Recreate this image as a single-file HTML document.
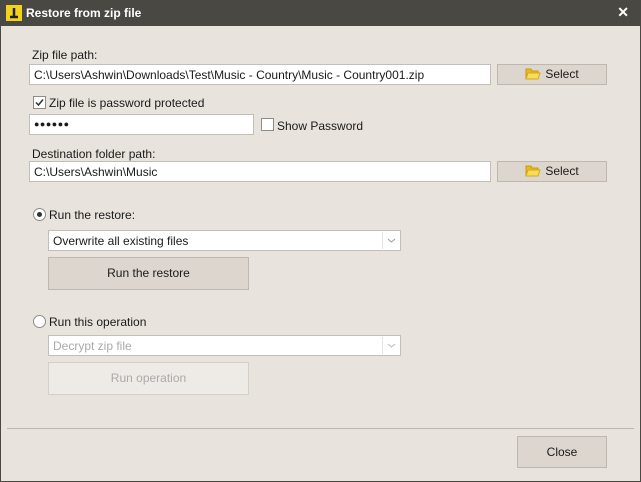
<!DOCTYPE html>
<html><head><meta charset="utf-8"><style>
*{box-sizing:border-box;margin:0;padding:0}
body{width:641px;height:482px;overflow:hidden;background:#e8e3dd;font-family:"Liberation Sans",sans-serif;font-size:12px;color:#1a1a1a;position:relative}
.win{position:absolute;left:0;top:0;width:641px;height:482px;border:1px solid #4a4843;}
.title{position:absolute;left:0;top:0;width:641px;height:26px;background:#4a4843;color:#fff;font-weight:bold;font-size:12px}
.title .t{position:absolute;left:26px;top:6px}
.ico{position:absolute;left:6px;top:5px;width:16px;height:16px;background:#f2d21b}
.x{position:absolute;right:12px;top:4px;font-size:14px;font-weight:bold}
.a{position:absolute}
.inp{position:absolute;background:#fff;border:1px solid #c2beb8;padding:3px 4px;height:21px;white-space:nowrap;overflow:hidden}
.btn{position:absolute;background:#ddd6cf;border:1px solid #bdb7b0;text-align:center}
.cb{position:absolute;width:13px;height:13px;border:1px solid #8f8b86;background:#fff}
.rd{position:absolute;width:13px;height:13px;border:1px solid #8f8b86;background:#fff;border-radius:50%}
.folder{display:inline-block;width:16px;height:13px;vertical-align:-2px;margin-right:4px}
.arr{position:absolute;right:1px;top:1px;width:17px;height:17px;border-left:1px solid #e6e2de}
</style></head><body>
<div class="win"></div>
<div class="title"><div class="ico"><svg width="16" height="16"><path d="M8 3V12M4 12H12" stroke="#222" stroke-width="2.5" fill="none"/></svg></div><span class="t">Restore from zip file</span><span class="x">✕</span></div>

<div class="a" style="left:32px;top:48px">Zip file path:</div>
<div class="inp" style="left:29px;top:64px;width:462px">C:\Users\Ashwin\Downloads\Test\Music - Country\Music - Country001.zip</div>
<div class="btn" style="left:497px;top:64px;width:110px;height:21px;line-height:19px"><svg class="folder"><path d="M1 2H6L7 4H13V12H1Z" fill="#e8b820" stroke="#c99a10"/><path d="M3 6H15L13 12H1Z" fill="#f7dc5c" stroke="#d6a815"/></svg>Select</div>

<div class="cb" style="left:33px;top:96px"><svg width="11" height="11" style="position:absolute;left:0;top:0"><path d="M2 5.5L4.5 8L9 2.5" stroke="#333" stroke-width="1.5" fill="none"/></svg></div>
<div class="a" style="left:49px;top:96px">Zip file is password protected</div>
<div class="inp" style="left:29px;top:114px;width:225px;font-size:9px;letter-spacing:0.5px;line-height:13px">●●●●●●</div>
<div class="cb" style="left:261px;top:118px"></div>
<div class="a" style="left:277px;top:119px">Show Password</div>

<div class="a" style="left:32px;top:147px">Destination folder path:</div>
<div class="inp" style="left:29px;top:161px;width:462px">C:\Users\Ashwin\Music</div>
<div class="btn" style="left:497px;top:161px;width:110px;height:21px;line-height:19px"><svg class="folder"><path d="M1 2H6L7 4H13V12H1Z" fill="#e8b820" stroke="#c99a10"/><path d="M3 6H15L13 12H1Z" fill="#f7dc5c" stroke="#d6a815"/></svg>Select</div>

<div class="rd" style="left:33px;top:208px"><div style="position:absolute;left:3px;top:3px;width:5px;height:5px;border-radius:50%;background:#333"></div></div>
<div class="a" style="left:49px;top:208px">Run the restore:</div>
<div class="inp" style="left:48px;top:230px;width:353px;height:21px">Overwrite all existing files<div class="arr"><svg width="16" height="17"><path d="M5 7L8.5 10L12 7" stroke="#999" fill="none"/></svg></div></div>
<div class="btn" style="left:48px;top:257px;width:201px;height:33px;line-height:31px">Run the restore</div>

<div class="rd" style="left:33px;top:315px"></div>
<div class="a" style="left:49px;top:315px">Run this operation</div>
<div class="inp" style="left:48px;top:335px;width:353px;height:21px;color:#aaa">Decrypt zip file<div class="arr"><svg width="16" height="17"><path d="M5 7L8.5 10L12 7" stroke="#bbb" fill="none"/></svg></div></div>
<div class="btn" style="left:48px;top:362px;width:201px;height:33px;line-height:31px;background:#eeebe7;border-color:#d3cfca;color:#aaa">Run operation</div>

<div class="a" style="left:7px;top:428px;width:627px;height:1px;background:#bcb7b0"></div>
<div class="btn" style="left:517px;top:436px;width:90px;height:32px;line-height:30px">Close</div>
</body></html>
